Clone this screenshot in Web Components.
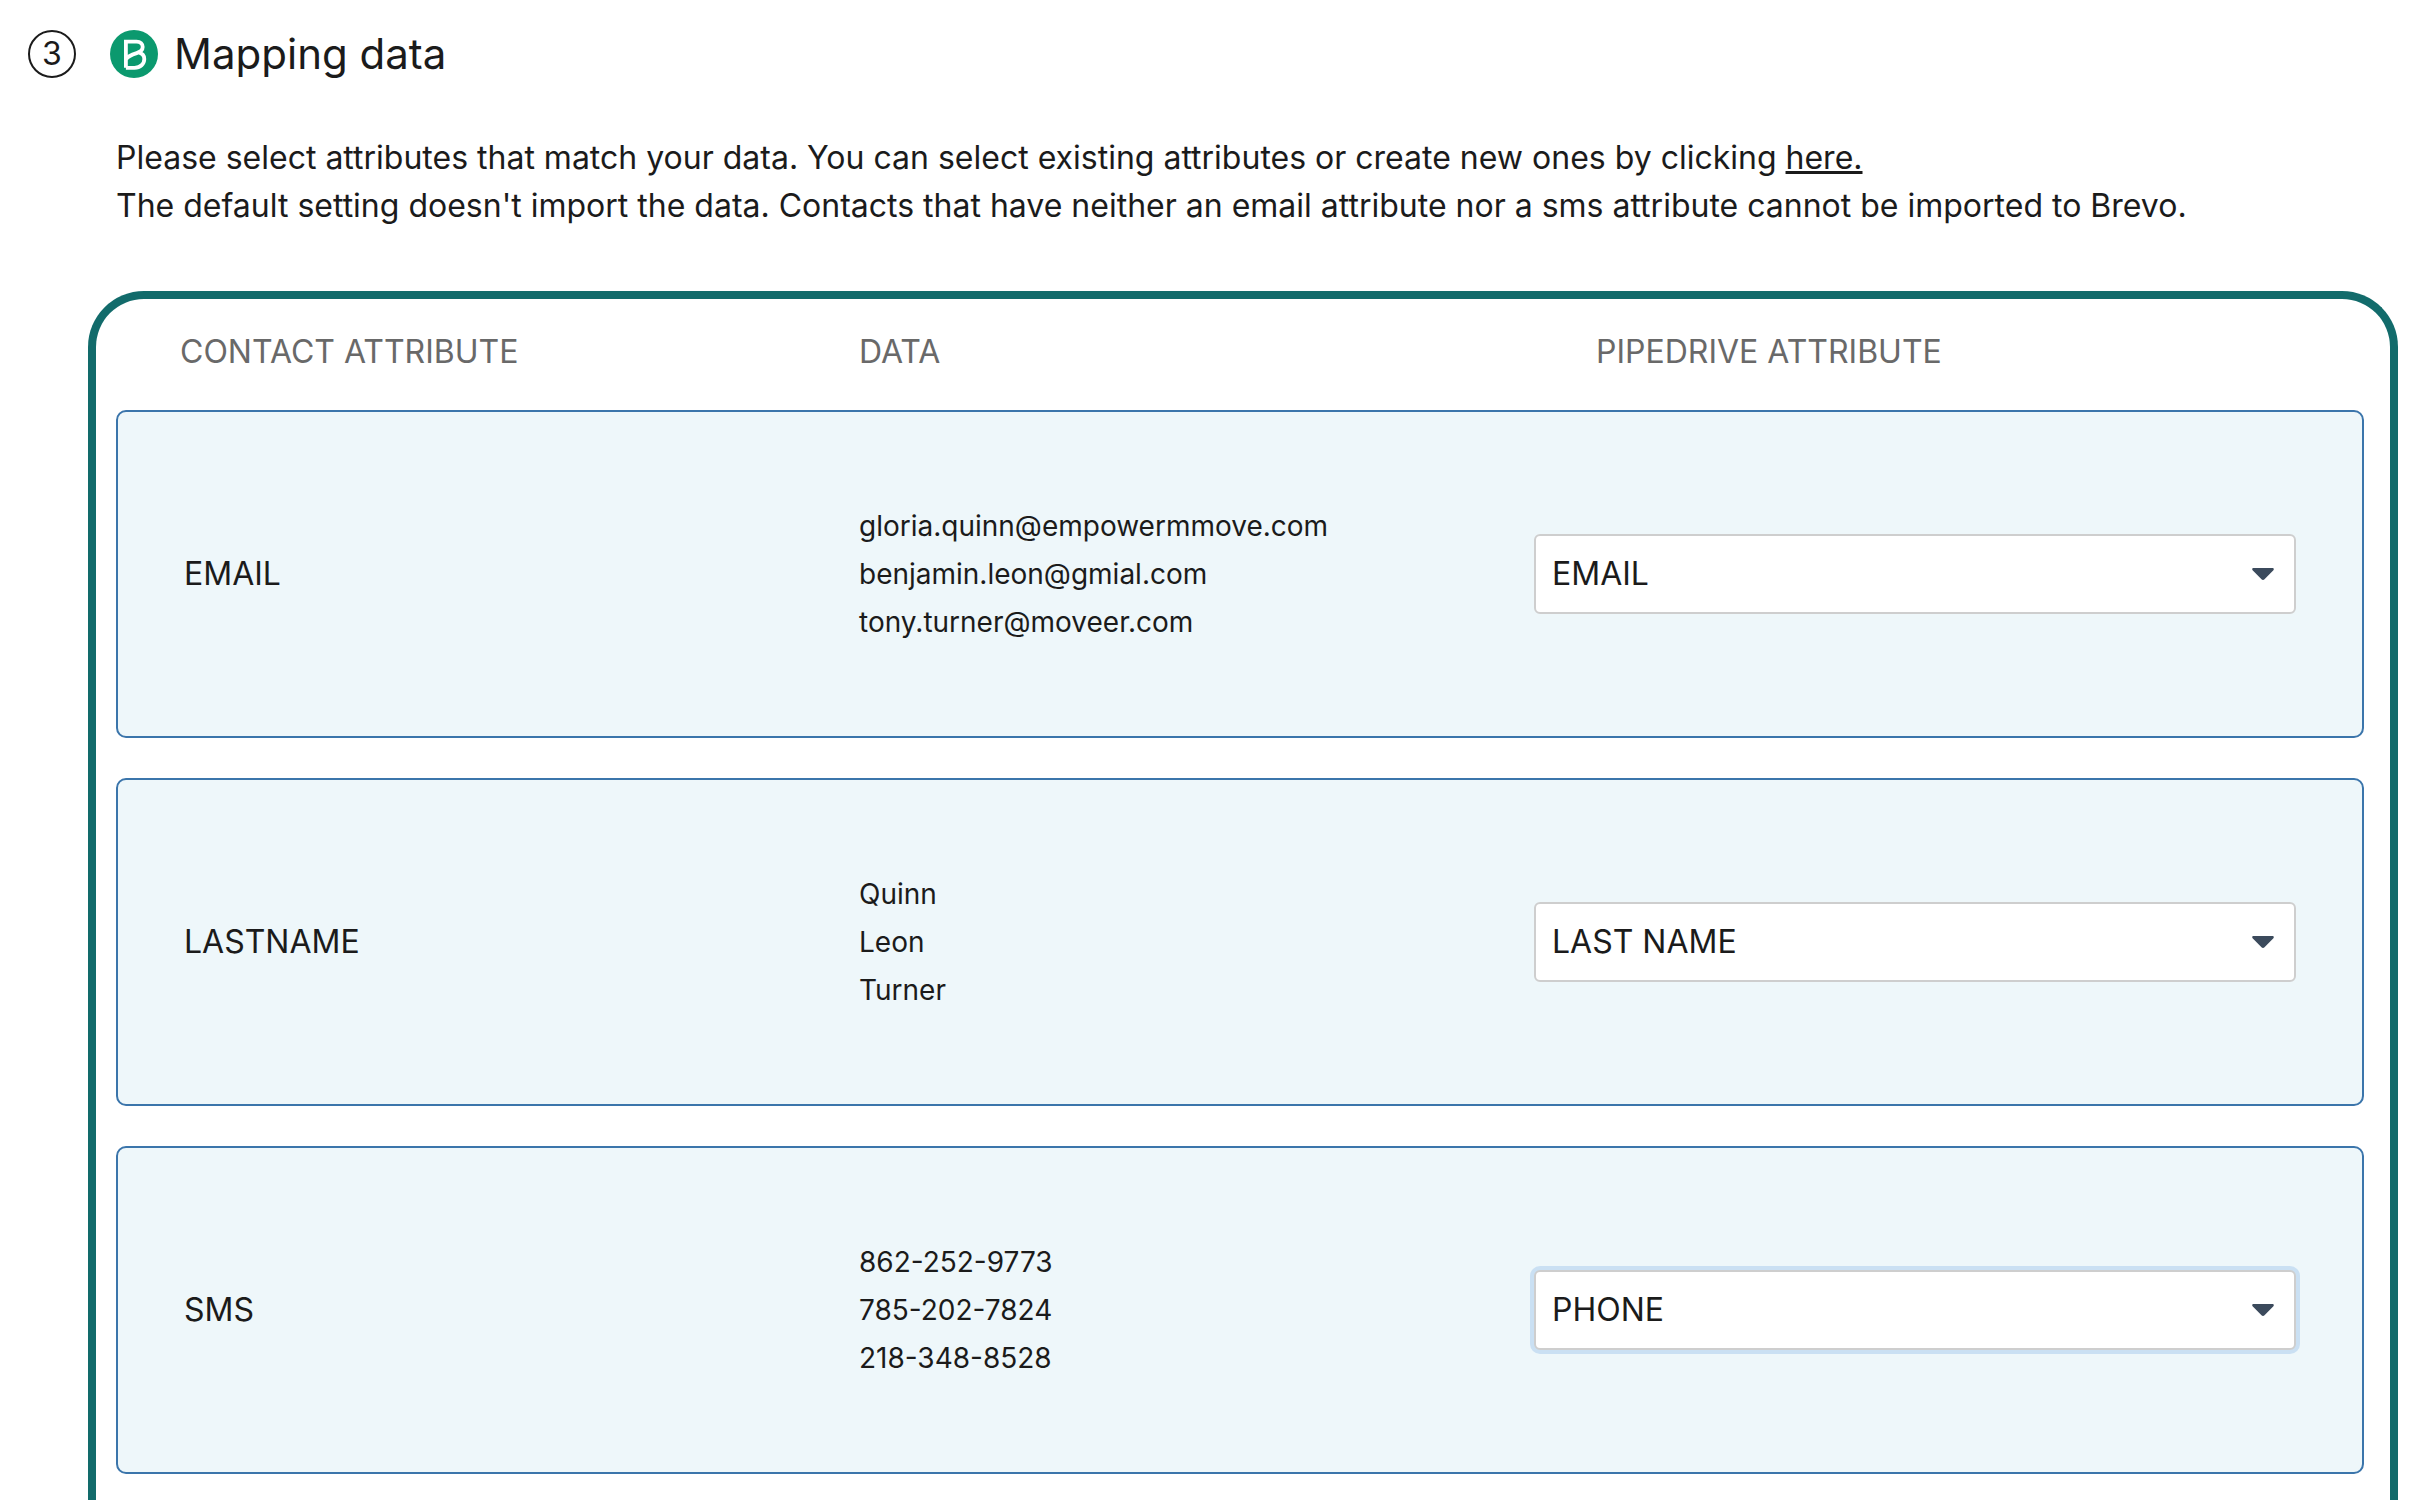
<!DOCTYPE html>
<html lang="en">
<head>
<meta charset="utf-8">
<meta name="viewport" content="width=device-width, initial-scale=1">
<title>Mapping data</title>
<style>
    body {
        margin: 0;
        background: #fff;
        color: #1b1b1b;
        font-family: Inter, "Liberation Sans", sans-serif;
        font-size: 32px;
        line-height: 48px;
    }

    a {
        color: inherit;
        text-decoration-thickness: 3px;
        text-underline-offset: 2px;
        text-decoration-skip-ink: none;
    }
</style>
</head>
<body>
<import-step number="3">
    <brevo-logo slot="icon"></brevo-logo>
    <span slot="title">Mapping data</span>
    <span slot="intro">Please select attributes that match your data. You can select existing attributes or create new ones by clicking <a href="#">here.</a><br>The default setting doesn't import the data. Contacts that have neither an email attribute nor a sms attribute cannot be imported to Brevo.</span>
    <mapping-table></mapping-table>
</import-step>

<script>
/**
 * Brevo Logo Component
 */
class BrevoLogo extends HTMLElement {
    constructor() {
        super();
        this.attachShadow({ mode: 'open' });
    }

    connectedCallback() {
        this.shadowRoot.innerHTML = `
            <style>
                :host {
                    display: block;
                    width: 48px;
                    height: 48px;
                }

                svg {
                    display: block;
                }
            </style>
            <svg width="48" height="48" viewBox="0 0 48 48" aria-hidden="true">
                <circle cx="24" cy="24" r="24" fill="#0b996e"/>
                <path d="M15.9 37.8V11.7h10.6c4 0 6.2 2.2 6.2 5.4 0 3.2-2.2 4.8-6 6-5.4 1.7-9 3-10.8 6.4M28.6 22.4c3.6.9 5.7 3.2 5.7 6.6 0 5-4 8.8-9.8 8.8h-8.6" fill="none" stroke="#fff" stroke-width="3.8"/>
            </svg>
        `;
    }
}

customElements.define('brevo-logo', BrevoLogo);

/**
 * Import Step Component
 * Numbered heading, intro text and a framed content slot
 */
class ImportStep extends HTMLElement {
    constructor() {
        super();
        this.attachShadow({ mode: 'open' });
    }

    connectedCallback() {
        this.render();
    }

    render() {
        this.shadowRoot.innerHTML = `
            <style>
                :host {
                    display: block;
                    padding-top: 30px;
                }

                .step-header {
                    display: flex;
                    align-items: center;
                    padding: 0 28px;
                }

                .step-number {
                    box-sizing: border-box;
                    width: 48px;
                    height: 48px;
                    margin-right: 34px;
                    border: 2px solid #1b1b1b;
                    border-radius: 50%;
                    line-height: 44px;
                    text-align: center;
                }

                .step-title {
                    margin: 0 0 0 16px;
                    font-size: 42px;
                    font-weight: 400;
                    line-height: 48px;
                }

                .step-intro {
                    margin: 56px 116px 61px;
                }

                .frame {
                    margin: 0 30px 0 88px;
                    padding: 0 26px 26px 20px;
                    border: 8px solid #126b6b;
                    border-bottom: 0;
                    border-radius: 56px 56px 0 0;
                }
            </style>

            <div class="step-header">
                <span class="step-number">${this.getAttribute('number')}</span>
                <slot name="icon"></slot>
                <h1 class="step-title"><slot name="title"></slot></h1>
            </div>
            <p class="step-intro"><slot name="intro"></slot></p>
            <div class="frame">
                <slot></slot>
            </div>
        `;
    }
}

customElements.define('import-step', ImportStep);

/**
 * Mapping Table Component
 * One row per contact attribute, with sample data and a select
 */
class MappingTable extends HTMLElement {
    constructor() {
        super();
        this.attachShadow({ mode: 'open' });
        this.options = ['EMAIL', 'LAST NAME', 'PHONE'];
        this.rows = [
            {
                name: 'EMAIL',
                samples: ['gloria.quinn@empowermmove.com', 'benjamin.leon@gmial.com', 'tony.turner@moveer.com'],
                value: 'EMAIL'
            },
            {
                name: 'LASTNAME',
                samples: ['Quinn', 'Leon', 'Turner'],
                value: 'LAST NAME'
            },
            {
                name: 'SMS',
                samples: ['862-252-9773', '785-202-7824', '218-348-8528'],
                value: 'PHONE',
                active: true
            }
        ];
    }

    connectedCallback() {
        this.render();
    }

    renderRow(row) {
        const id = `map-${row.name.toLowerCase()}`;
        const options = this.options
            .map(o => `<option${o === row.value ? ' selected' : ''}>${o}</option>`)
            .join('');

        return `
            <tr>
                <th scope="row"><label for="${id}">${row.name}</label></th>
                <td class="samples">${row.samples.map(s => `<div>${s}</div>`).join('')}</td>
                <td>
                    <div class="select${row.active ? ' active' : ''}">
                        <select id="${id}">${options}</select>
                        <svg width="22" height="12" viewBox="0 0 22 12" aria-hidden="true">
                            <path d="M1.5 0h19c1.2 0 1.7 1.3.9 2.2l-8.9 9.1c-.8.9-2.2.9-3 0L.6 2.2C-.2 1.3.3 0 1.5 0z" fill="#3b4a5c"/>
                        </svg>
                    </div>
                </td>
            </tr>
        `;
    }

    render() {
        this.shadowRoot.innerHTML = `
            <style>
                :host {
                    display: block;
                }

                table,
                thead {
                    display: block;
                }

                tbody {
                    display: grid;
                    gap: 40px;
                }

                tr {
                    display: grid;
                    grid-template-columns: 677fr 675fr 762fr;
                    align-items: center;
                }

                th,
                td {
                    padding: 0;
                    font-weight: 400;
                    text-align: left;
                }

                thead tr {
                    padding: 29px 68px 34px 66px;
                    color: #696969;
                }

                thead th:first-child {
                    margin-left: -2px;
                }

                thead th:last-child {
                    padding-left: 62px;
                }

                tbody tr {
                    box-sizing: border-box;
                    min-height: 328px;
                    padding: 0 66px 0 64px;
                    border: 2px solid #3b75ab;
                    border-radius: 10px;
                    background: #eef7fa;
                }

                tbody th {
                    padding-left: 2px;
                }

                .samples {
                    font-size: 28px;
                }

                .select {
                    display: grid;
                    align-items: center;
                }

                .select > * {
                    grid-area: 1 / 1;
                }

                select {
                    appearance: none;
                    box-sizing: border-box;
                    width: 100%;
                    height: 80px;
                    padding: 0 56px 0 16px;
                    border: 2px solid #cecece;
                    border-radius: 6px;
                    outline: 0;
                    background: #fff;
                    color: inherit;
                    font: inherit;
                }

                .active select {
                    box-shadow: 0 0 0 4px #cae0f3;
                }

                svg {
                    justify-self: end;
                    margin-right: 22px;
                    pointer-events: none;
                }
            </style>

            <table>
                <thead>
                    <tr>
                        <th scope="col">CONTACT ATTRIBUTE</th>
                        <th scope="col">DATA</th>
                        <th scope="col">PIPEDRIVE ATTRIBUTE</th>
                    </tr>
                </thead>
                <tbody>${this.rows.map(row => this.renderRow(row)).join('')}</tbody>
            </table>
        `;
    }
}

customElements.define('mapping-table', MappingTable);
</script>
</body>
</html>
